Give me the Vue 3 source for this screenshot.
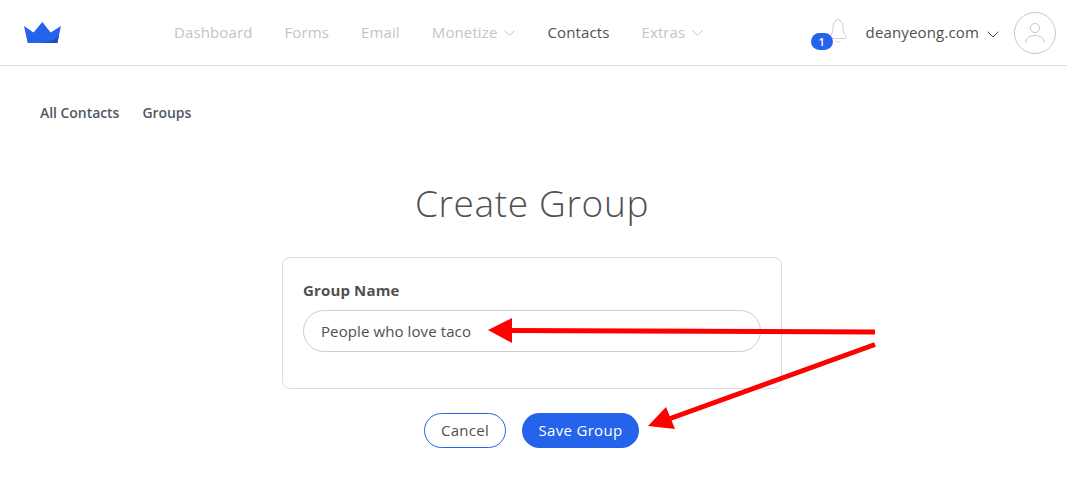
<script setup>
const links = [
  { label: 'Dashboard' },
  { label: 'Forms' },
  { label: 'Email' },
  { label: 'Monetize', caret: true },
  { label: 'Contacts', active: true },
  { label: 'Extras', caret: true },
]
</script>

<template>
  <div class="page">
    <header class="topbar">
      <svg class="logo" width="37" height="21" viewBox="0 0 37 21">
        <path d="M0 4 L9.5 10.5 L18.3 0 L26.7 10.5 L37 4 L33.3 21 L3.7 21 Z" fill="#2563eb" />
        <path d="M35.2 13 L33.3 21 L18 21 C25 20 31 18 35.2 13 Z" fill="#1d4fc0" />
      </svg>
      <nav class="nav">
        <a v-for="l in links" :key="l.label" class="nav-link" :class="{ active: l.active }">
          {{ l.label }}
          <svg v-if="l.caret" class="caret" width="11" height="6" viewBox="0 0 11 6">
            <path d="M0.5 0.5 L5.5 5.5 L10.5 0.5" fill="none" stroke="#c4c4c4" stroke-width="1" />
          </svg>
        </a>
      </nav>
      <div class="account">
        <div class="bell">
          <svg width="18" height="26" viewBox="0 0 18 26">
            <path d="M9 1 C7.8 1 7.2 1.9 7.2 3 C5 3.9 4 6 4 9 C4 13 3.6 15.6 1 18.2 C0.3 19.2 0.7 20.5 2 20.5 L16 20.5 C17.3 20.5 17.7 19.2 17 18.2 C14.4 15.6 14 13 14 9 C14 6 13 3.9 10.8 3 C10.8 1.9 10.2 1 9 1 Z" fill="none" stroke="#cfcfcf" stroke-width="1" />
            <path d="M6.5 22.5 C7.5 24.6 10.5 24.6 11.5 22.5" fill="none" stroke="#cfcfcf" stroke-width="1" />
          </svg>
          <span class="badge">1</span>
        </div>
        <span class="domain">deanyeong.com</span>
        <svg class="domain-caret" width="12" height="7" viewBox="0 0 12 7">
          <path d="M0.7 0.7 L6 6 L11.3 0.7" fill="none" stroke="#4a4a4a" stroke-width="1" />
        </svg>
        <div class="avatar">
          <svg width="24" height="24" viewBox="0 0 24 24">
            <circle cx="12" cy="7" r="4.6" fill="none" stroke="#c8c8c8" stroke-width="1" />
            <path d="M3 22 C3 16.5 7 14.5 12 14.5 C17 14.5 21 16.5 21 22" fill="none" stroke="#c8c8c8" stroke-width="1" />
          </svg>
        </div>
      </div>
    </header>

    <div class="subnav">
      <a>All Contacts</a>
      <a>Groups</a>
    </div>

    <main class="main">
      <h1 class="title">Create Group</h1>
      <section class="card">
        <label class="label">Group Name</label>
        <div class="input">People who love taco</div>
      </section>
      <div class="actions">
        <button class="btn ghost">Cancel</button>
        <button class="btn primary">Save Group</button>
      </div>
    </main>

    <svg class="arrows" width="1067" height="477" viewBox="0 0 1067 477">
      <path d="M875 332 L510 330.5" stroke="#fe0000" stroke-width="5" fill="none" />
      <path d="M488 330 L512 318 L512 343 Z" fill="#fe0000" />
      <path d="M875 344.5 L666 420" stroke="#fe0000" stroke-width="5" fill="none" />
      <path d="M648 426 L666 407 L675 429 Z" fill="#fe0000" />
    </svg>
  </div>
</template>

<style>
html, body { margin: 0; background: #fff; }
</style>

<style scoped>
.page {
  position: relative;
  width: 1067px;
  height: 477px;
  overflow: hidden;
  background: #fff;
  font-family: "Open Sans", sans-serif;
  color: #505050;
}
.topbar {
  display: flex;
  align-items: center;
  height: 65px;
  border-bottom: 1px solid #dcdcdc;
  padding: 0 11px 0 24px;
}
.logo { flex: none; margin-top: -1px; }
.nav {
  display: flex;
  gap: 32px;
  margin-left: 113px;
  margin-top: -2px;
  font-size: 15px;
  letter-spacing: 0.12px;
}
.nav-link {
  display: flex;
  align-items: center;
  gap: 7px;
  color: #c4c4c4;
}
.nav-link.active { color: #505050; }
.caret { margin-top: 3px; }
.account {
  display: flex;
  align-items: center;
  margin-left: auto;
}
.bell { position: relative; width: 18px; height: 26px; margin-right: 19px; margin-top: -4px; }
.badge {
  position: absolute;
  left: -18px;
  top: 15px;
  width: 22px;
  height: 17px;
  border-radius: 8.5px;
  background: #2563eb;
  color: #fff;
  font-size: 11px;
  font-weight: 600;
  line-height: 17px;
  text-align: center;
}
.domain { font-size: 15px; letter-spacing: 0.15px; margin-top: -2px; }
.domain-caret { margin-left: 8px; margin-top: 3px; }
.avatar {
  display: flex;
  align-items: center;
  justify-content: center;
  box-sizing: border-box;
  width: 42px;
  height: 42px;
  margin-left: 15px;
  border: 1px solid #c8c8c8;
  border-radius: 50%;
}
.subnav {
  display: flex;
  gap: 23px;
  padding: 38px 0 0 40px;
  font-size: 14px;
  font-weight: 600;
  line-height: 18px;
  letter-spacing: -0.05px;
  color: #4f5965;
}
.main {
  display: flex;
  flex-direction: column;
  align-items: center;
  padding-right: 3px;
}
.title {
  margin: 56px 0 0;
  font-size: 37px;
  font-weight: 300;
  line-height: 50px;
  letter-spacing: 0.65px;
  color: #505050;
}
.card {
  box-sizing: border-box;
  width: 500px;
  height: 132px;
  margin-top: 29px;
  padding: 22px 20px 0;
  border: 1px solid #dcdcdc;
  border-radius: 8px;
}
.label {
  display: block;
  font-size: 15px;
  font-weight: 700;
  line-height: 20px;
  letter-spacing: 0.15px;
  color: #505050;
}
.input {
  box-sizing: border-box;
  height: 42px;
  margin-top: 10px;
  padding: 0 17px;
  border: 1px solid #cfcfcf;
  border-radius: 21px;
  font-size: 15px;
  line-height: 40px;
  letter-spacing: 0.1px;
}
.actions {
  display: flex;
  gap: 16px;
  margin-top: 24px;
  margin-right: 1px;
}
.btn {
  box-sizing: border-box;
  height: 35px;
  border-radius: 17.5px;
  font-family: inherit;
  font-size: 15px;
  letter-spacing: 0.3px;
  padding: 0 0 2px;
}
.ghost { width: 82px; background: #fff; border: 1px solid #2563eb; color: #505050; }
.primary { width: 117px; background: #2563eb; border: 0; color: #fff; }
.arrows { position: absolute; left: 0; top: 0; pointer-events: none; }
</style>
